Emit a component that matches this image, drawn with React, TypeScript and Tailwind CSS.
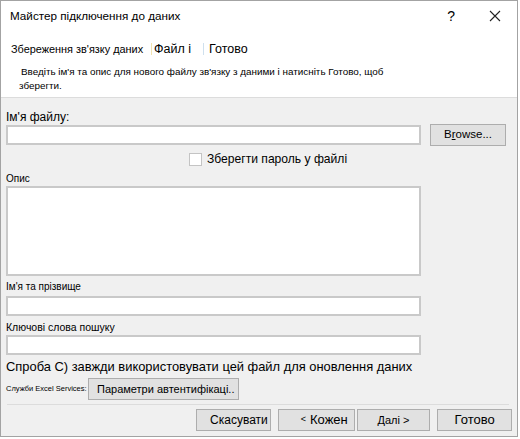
import React from "react";

const font = { fontFamily: '"Liberation Sans", Arial, sans-serif' };

function WinButton({
  children,
  className = "",
}: {
  children: React.ReactNode;
  className?: string;
}) {
  return (
    <button
      type="button"
      className={
        "flex items-center justify-center whitespace-nowrap border border-[#adadad] bg-[#e1e1e1] text-black " +
        className
      }
    >
      {children}
    </button>
  );
}

function Field({ className = "" }: { className?: string }) {
  return <div className={"w-[415px] border-2 border-[#c9c9c9] bg-white " + className} />;
}

export default function App() {
  return (
    <div className="h-[439px] w-[520px] bg-white" style={font}>
      <div className="flex h-[437px] w-[518px] flex-col border border-[#a3a3a3] bg-[#f0f0f0] text-black">
        {/* Header */}
        <div className="flex h-[97px] flex-col border-b border-[#dcdcdc] bg-white">
          <div className="flex h-[30px] items-center justify-between pl-[9px] pr-[16px]">
            <span className="whitespace-nowrap text-[11.7px] leading-none">Майстер підключення до даних</span>
            <div className="flex items-center gap-[34px]">
              <span className="text-[14px] leading-none">?</span>
              <svg width="12" height="12" viewBox="0 0 12 12">
                <path d="M1 1 L11 11 M11 1 L1 11" stroke="#222" strokeWidth="1.1" fill="none" />
              </svg>
            </div>
          </div>
          <div className="mt-[10px] flex h-[16px] items-center whitespace-nowrap pl-[10px]">
            <span className="text-[10.9px] leading-none">Збереження зв'язку даних</span>
            <span className="ml-[8px] h-[12px] border-l border-[#f1e3b0]" />
            <span className="ml-[2px] text-[12.5px] leading-none">Файл і</span>
            <span className="ml-[12px] h-[12px] border-l border-[#cfe0ee]" />
            <span className="ml-[5px] text-[12.5px] leading-none">Готово</span>
          </div>
          <div className="mt-[8px] whitespace-nowrap pl-[20px] text-[9.9px] leading-[14px]">
            Введіть ім'я та опис для нового файлу зв'язку з даними і натисніть Готово, щоб
            <br />
            <span className="-ml-[2px]">зберегти.</span>
          </div>
        </div>

        {/* Body */}
        <div className="flex flex-1 flex-col px-[5px]">
          <div className="mt-[13px] h-[13px] text-[12px] leading-[13px]">Ім'я файлу:</div>
          <div className="flex items-start">
            <Field className="mt-[1px] h-[20px]" />
            <WinButton className="ml-[9px] h-[22px] w-[76px] text-[11.5px]">
              B<span className="underline">r</span>owse...
            </WinButton>
          </div>

          <label className="ml-[183px] mt-[6px] flex h-[14px] items-center gap-[5px]">
            <span className="h-[13px] w-[13px] border border-[#c4c4c4] bg-white" />
            <span className="whitespace-nowrap text-[12.1px] leading-none">Зберегти пароль у файлі</span>
          </label>

          <div className="mt-[7px] h-[12px] text-[10px] leading-[12px]">Опис</div>
          <Field className="mt-[1px] h-[90px]" />

          <div className="mt-[5px] h-[12px] text-[10px] leading-[12px]">Ім'я та прізвище</div>
          <Field className="mt-[3px] h-[20px]" />

          <div className="mt-[5px] h-[12px] text-[10.5px] leading-[12px]">Ключові слова пошуку</div>
          <Field className="mt-[2px] h-[20px]" />

          <div className="mt-[3px] h-[18px] whitespace-nowrap text-[12.9px] leading-[18px]">
            Спроба С) завжди використовувати цей файл для оновлення даних
          </div>

          <div className="mt-[2px] flex items-center">
            <span className="w-[82px] whitespace-nowrap text-[7.5px] leading-none">Служби Excel Services:</span>
            <WinButton className="h-[22px] w-[151px] justify-start pl-[8px] text-[11px]">
              Параметри автентифікаці..
            </WinButton>
          </div>

          <div className="ml-[1px] mr-[3px] mt-[4px] border-t border-[#dcdcdc]" />

          <div className="mt-[4px] flex items-center">
            <WinButton className="ml-[190px] h-[22px] w-[75px] justify-end pr-[2px] text-[12px]">
              Скасувати
            </WinButton>
            <WinButton className="ml-[7px] h-[22px] w-[77px] justify-start pl-[22px] text-[13px]">
              <span className="mr-[4px] text-[9px]">&lt;</span>Кожен
            </WinButton>
            <WinButton className="ml-[2px] h-[22px] w-[74px] text-[11px]">Далі &gt;</WinButton>
            <WinButton className="ml-[7px] h-[22px] w-[75px] text-[13px]">Готово</WinButton>
          </div>
        </div>
      </div>
    </div>
  );
}
